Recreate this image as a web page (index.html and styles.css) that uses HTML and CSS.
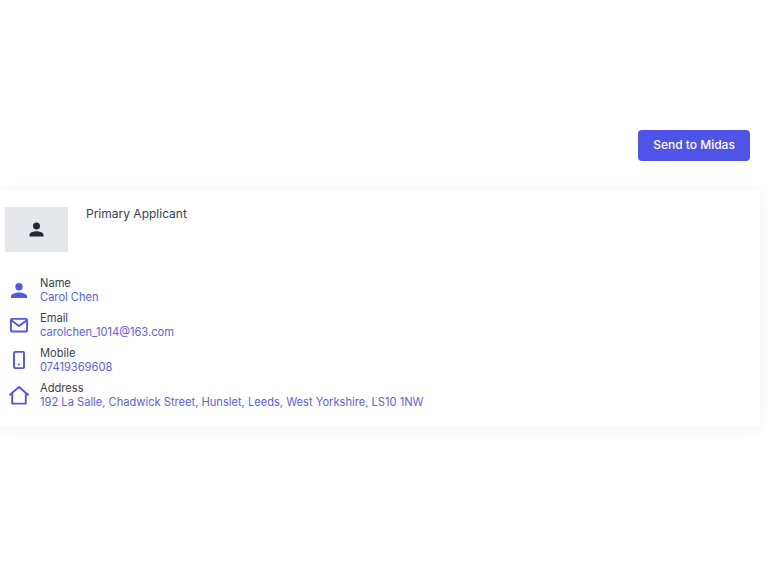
FILE: index.html
```html
<!DOCTYPE html>
<html lang="en">
<head>
<meta charset="utf-8">
<title>Primary Applicant</title>
<link rel="stylesheet" href="styles.css">
</head>
<body>
<main class="page">
  <div class="actions"><button class="send" type="button">Send to Midas</button></div>
  <section class="card">
    <header class="head">
      <div class="avatar">
        <svg class="avatar-icon" viewBox="0 0 24 24"><path d="M12 12a4 4 0 1 0 0-8 4 4 0 0 0 0 8zm0 2c-2.700 0-8 1.300-8 4v2h16v-2c0-2.700-5.300-4-8-4z"/></svg>
      </div>
      <h2 class="title">Primary Applicant</h2>
    </header>
    <ul class="rows">
      <li class="row">
        <svg class="icon" viewBox="0 0 24 24"><path class="solid" d="M12 12.500a3.700 3.700 0 1 0 0-7.400 3.700 3.700 0 0 0 0 7.400zm0 2c-2.700 0-8 1.200-8 3.700v1.800h16v-1.800c0-2.500-5.300-3.700-8-3.700z"/></svg>
        <div class="text"><span class="label">Name</span><span class="value">Carol Chen</span></div>
      </li>
      <li class="row">
        <svg class="icon" viewBox="0 0 24 24"><rect x="3.900" y="5.900" width="16.200" height="12.600" rx="1"/><path d="M3.900 6.900 12 13l8.100-6.100"/></svg>
        <div class="text"><span class="label">Email</span><span class="value">carolchen_1014@163.com</span></div>
      </li>
      <li class="row">
        <svg class="icon" viewBox="0 0 24 24"><rect x="7" y="3.900" width="10" height="16.200" rx="1"/><circle class="solid" cx="12" cy="16.500" r="1"/></svg>
        <div class="text"><span class="label">Mobile</span><span class="value">07419369608</span></div>
      </li>
      <li class="row">
        <svg class="icon" viewBox="0 0 24 24"><path d="M2.400 12.200 12 4l9.600 8.200M5.200 10v10.600h13.600V10"/></svg>
        <div class="text"><span class="label">Address</span><span class="value">192 La Salle, Chadwick Street, Hunslet, Leeds, West Yorkshire, LS10 1NW</span></div>
      </li>
    </ul>
  </section>
</main>
</body>
</html>
```
FILE: styles.css
```css
* { box-sizing: border-box; }
html, body { margin: 0; background: #fff; }
body { font-family: Inter, "Liberation Sans", sans-serif; }
.page { width: 760px; height: 576px; padding-top: 130px; }
.actions { display: flex; justify-content: flex-end; padding-right: 10px; margin-bottom: 29px; }
.send {
  width: 112px; height: 31px; padding: 0 0 1px; border: 0; border-radius: 4px;
  background: #4f54e8; color: #fff;
  font: 500 12px/30px Inter, "Liberation Sans", sans-serif;
}
.card {
  height: 237px; padding: 17px 5px 0;
  background: #fff; border-radius: 4px;
  box-shadow: 0 2px 16px rgba(0, 0, 0, 0.06);
}
.head { display: flex; align-items: flex-start; gap: 18px; }
.avatar {
  width: 63px; height: 45px; background: #e5e7eb;
  display: flex; align-items: center; justify-content: center;
}
.avatar-icon { width: 21px; height: 21px; fill: #1f2937; }
.title { margin: 0; font-size: 12px; font-weight: 400; line-height: 14px; color: #374151; }
.rows { list-style: none; margin: 24px 0 0; padding: 0; display: flex; flex-direction: column; gap: 7px; }
.row { display: flex; align-items: center; gap: 9px; height: 28px; padding-left: 2px; }
.icon { width: 24px; height: 24px; flex: none; fill: none; stroke: #5257ea; stroke-width: 1.900; stroke-linejoin: round; }
.icon .solid { fill: #5257ea; stroke: none; }
.text { display: flex; flex-direction: column; font-size: 11.140px; line-height: 14px; }
.label { color: #374151; }
.value { color: #5a5fec; }
```
